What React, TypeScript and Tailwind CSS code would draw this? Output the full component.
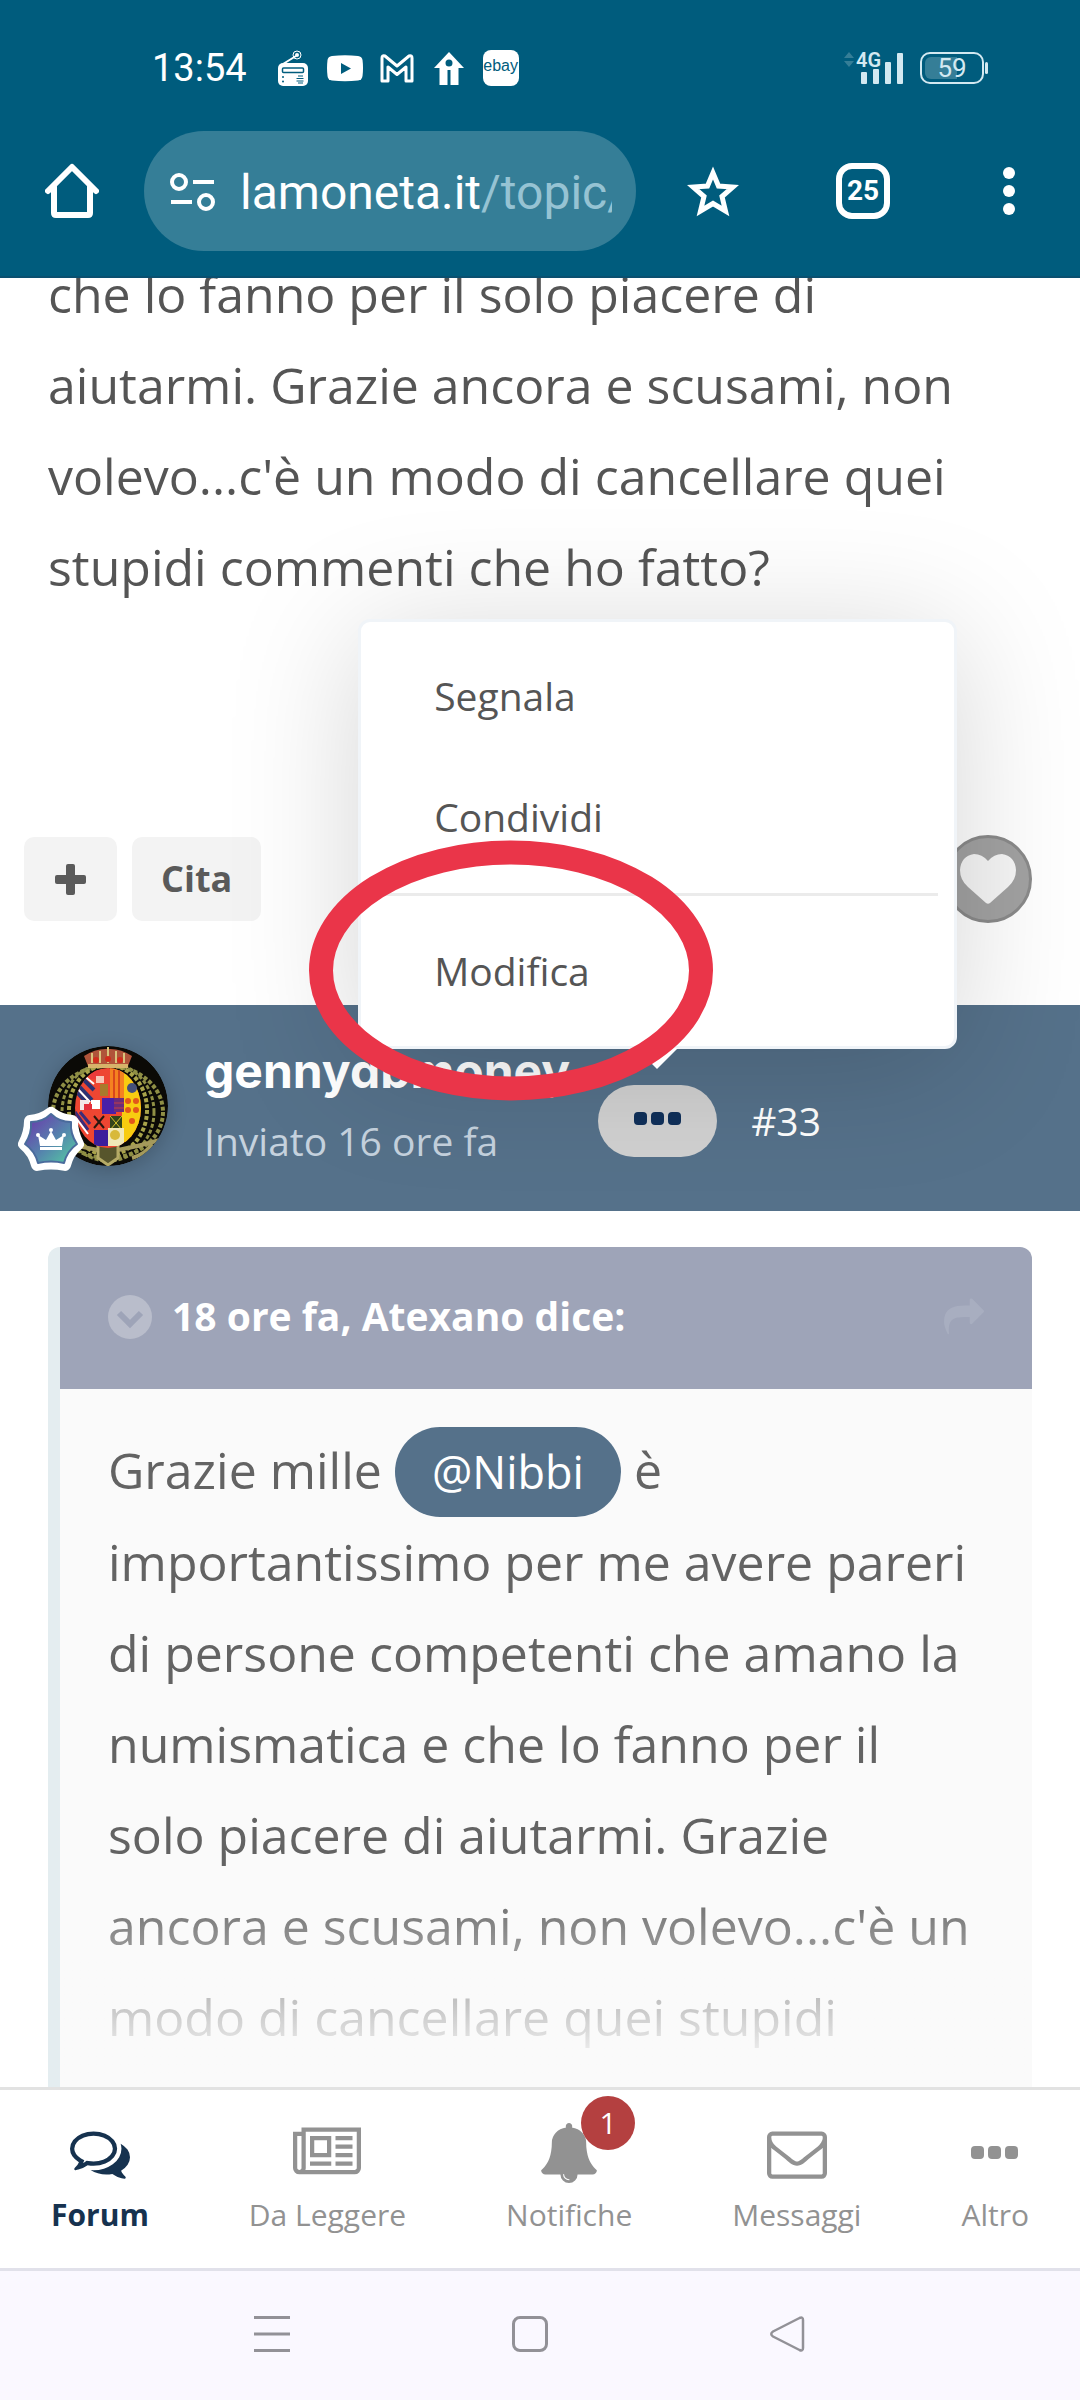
import React from 'react'

const BODY_TEXT = "text-[50px] leading-[91px] font-['Open_Sans',sans-serif]"

const COMMENTS_PATH =
  'M704 384q-153 0-286 52t-211.5 141-78.5 191q0 82 53 158t149 132l97 56-35 84q34-20 62-39l44-31 53 10q78 14 153 14 153 0 286-52t211.5-141 78.5-191-78.5-191-211.5-141-286-52zm0-128q191 0 353.5 68.5t256.5 186.5 94 257-94 257-256.5 186.5-353.5 68.5q-86 0-176-16-124 88-278 128-36 9-86 16h-3q-11 0-20.5-8t-11.5-21q-1-3-1-6.5t.5-6.5 2-6l2.5-5 3.5-5.5 4-5 4.5-5 4-4.5q5-6 23-25t26-29.5 22.5-29 25-38.5 20.5-44q-124-72-195-177t-71-224q0-139 94-257t256.5-186.5 353.5-68.5zm822 1169q10 24 20.5 44t25 38.5 22.5 29 26 29.5 23 25q1 1 4 4.5t4.5 5 4 5 3.5 5.5l2.5 5 2 6 .5 6.5-1 6.5q-3 14-13 22t-22 7q-50-7-86-16-154-40-278-128-90 16-176 16-271 0-472-132 58 4 88 4 161 0 309-45t264-129q125-92 192-212t67-254q0-77-23-152 129 71 204 178t75 230q0 120-71 224.5t-195 176.5z'
const NEWS_PATH =
  'M1024 512h-384v384h384v-384zm128 640v128h-640v-128h640zm0-768v640h-640v-640h640zm640 768v128h-512v-128h512zm0-256v128h-512v-128h512zm0-256v128h-512v-128h512zm0-256v128h-512v-128h512zm-1536 960v-960h-128v960q0 26 19 45t45 19 45-19 19-45zm1664 0v-1088h-1536v1088q0 33-11 64h1483q26 0 45-19t19-45zm128-1216v1216q0 80-56 136t-136 56h-1664q-80 0-136-56t-56-136v-1088h256v-128h1792z'
const BELL_PATH =
  'M912 1696q0-16-16-16-59 0-101.5-42.5t-42.5-101.5q0-16-16-16t-16 16q0 73 51.5 124.5t124.5 51.5q16 0 16-16zm816-288q0 52-38 90t-90 38h-448q0 106-75 181t-181 75-181-75-75-181h-448q-52 0-90-38t-38-90q50-42 91-88t85-119.5 74.5-158.5 50-206 19.5-260q0-152 117-282.5t307-158.5q-8-19-8-39 0-40 28-68t68-28 68 28 28 68q0 20-8 39 190 28 307 158.5t117 282.5q0 139 19.5 260t50 206 74.5 158.5 85 119.5 91 88z'
const ENVELOPE_PATH =
  'M1664 1504v-768q-32 36-69 66-268 206-426 338-51 43-83 67t-86.5 48.5-102.5 24.5h-2q-48 0-102.5-24.5t-86.5-48.5-83-67q-158-132-426-338-37-30-69-66v768q0 13 9.5 22.5t22.5 9.5h1472q13 0 22.5-9.5t9.5-22.5zm0-1051v-24.5l-.5-13-3-12.5-5.5-9-9-7.5-14-2.5h-1472q-13 0-22.5 9.5t-9.5 22.5q0 168 147 284 193 152 401 317 6 5 35 29.5t46 37.5 44.5 31.5 50.5 27.5 43 9h2q20 0 43-9t50.5-27.5 44.5-31.5 46-37.5 35-29.5q208-165 401-317 54-43 100.5-115.5t46.5-131.5zm128-37v1088q0 66-47 113t-113 47h-1472q-66 0-113-47t-47-113v-1088q0-66 47-113t113-47h1472q66 0 113 47t47 113z'
const SHARE_PATH =
  'M1792 640q0 26-19 45l-512 512q-19 19-45 19t-45-19-19-45v-256h-224q-98 0-175.5 6t-154 21.5-133 42.5-105.5 69.5-80 101-48.5 138.5-17.5 181q0 55 5 123 0 6 2.5 23.5t2.5 26.5q0 15-8.5 25t-23.5 10q-16 0-28-17-7-9-13-22t-13.5-30-10.5-24q-127-285-127-451 0-199 53-333 162-403 875-403h224v-256q0-26 19-45t45-19 45 19l512 512q19 19 19 45z'

const tabs = [
  { label: 'Forum', box: '0 0 1792 1792', path: COMMENTS_PATH, size: 'h-[60px] w-[60px]', active: true },
  { label: 'Da Leggere', box: '0 0 2048 1792', path: NEWS_PATH, size: 'h-[60px] w-[68px]' },
  { label: 'Notifiche', box: '0 0 1792 1792', path: BELL_PATH, size: 'h-[60px] w-[60px]', badge: '1' },
  { label: 'Messaggi', box: '0 0 1792 1792', path: ENVELOPE_PATH, size: 'h-[60px] w-[60px]' },
  { label: 'Altro' },
]

function Dots({ className }: { className: string }) {
  return (
    <svg viewBox="0 0 48 14" className={className} fill="currentColor" aria-hidden="true">
      <rect x="0" y="0" width="13" height="13" rx="4" />
      <rect x="17" y="0" width="13" height="13" rx="4" />
      <rect x="34" y="0" width="13" height="13" rx="4" />
    </svg>
  )
}

function StatusBar() {
  return (
    <div className="flex h-[131px] items-center justify-between pt-1 pr-[92px] pl-[152px] font-[Roboto,sans-serif] text-white">
      <div className="flex items-center gap-4">
        <span className="mr-3 text-[38px] leading-none">13:54</span>

        <svg viewBox="0 0 36 36" className="h-9 w-9">
          <rect x="3" y="13" width="30" height="23" rx="5" fill="#fff" />
          <path d="M8 14L21 6" stroke="#fff" strokeWidth="2" />
          <circle cx="22" cy="5" r="4" fill="none" stroke="#fff" strokeWidth="1" />
          <circle cx="22" cy="5" r="2" fill="#fff" />
          <rect x="7.500" y="18" width="21" height="4.500" rx="1" fill="none" stroke="#005c7d" strokeWidth="1.500" />
          <circle cx="8" cy="27" r="1" fill="#005c7d" />
          <circle cx="8" cy="31.500" r="1" fill="#005c7d" />
          <path d="M23 26h5M21.500 28.500h7M21.500 31h7M23 33h5" stroke="#005c7d" strokeWidth="1" />
        </svg>

        <svg viewBox="0 0 36 36" className="h-9 w-9">
          <path d="M5 6Q18 4.500 31 6Q35 6.500 35.500 10Q36.500 18 35.500 26Q35 30 31 30.500Q18 32 5 30.500Q1 30 .500 26Q-.500 18 .500 10Q1 6.500 5 6Z" fill="#fff" />
          <path d="M14 13L24 18.500L14 24Z" fill="#005c7d" />
        </svg>

        <svg viewBox="0 0 36 36" className="h-9 w-9" fill="none" stroke="#fff" strokeWidth="3" strokeLinejoin="round">
          <path d="M3 31V8Q3 5 6 6L18 16L30 6Q33 5 33 8V31H27V17L18 24.500L9 17V31Z" />
        </svg>

        <svg viewBox="0 0 36 36" className="h-9 w-9">
          <path
            fillRule="evenodd"
            fill="#fff"
            d="M18 2L33 18H27.500V35H19.500V20H16.500V35H8.500V18H3ZM18 9.500A3.500 3.500 0 1 0 18 16.500A3.500 3.500 0 1 0 18 9.500Z"
          />
        </svg>

        <span className="flex h-9 w-9 items-center justify-center rounded-lg bg-white pb-1 font-['Liberation_Sans',sans-serif] text-[16px] leading-none text-[#005c7d]">
          ebay
        </span>
      </div>

      <div className="flex items-center gap-4 text-[#d3e9f1]">
        <svg viewBox="0 0 62 36" className="h-9 w-[62px]">
          <path d="M2 8L7 2L12 8ZM2 11L7 17L12 11Z" fill="#357e97" />
          <text x="14" y="17" fontSize="20" fontWeight="600" fill="#d3e9f1">4G</text>
          <rect x="19" y="22" width="6" height="12" rx="1" fill="#d3e9f1" />
          <rect x="31" y="19" width="6" height="15" rx="1" fill="#d3e9f1" />
          <rect x="43" y="12" width="6" height="22" rx="1" fill="#d3e9f1" />
          <rect x="55" y="3" width="6" height="31" rx="1" fill="#d3e9f1" />
        </svg>
        <div className="flex items-center gap-px">
          <div className="flex h-8 w-16 rounded-[10px] border-2 border-[#d3e9f1] p-[3px]">
            <div className="flex w-full items-center justify-center rounded-md bg-linear-to-r from-[#357e97] from-60% to-transparent to-60% text-[26px] leading-none">
              59
            </div>
          </div>
          <div className="h-3 w-[3px] rounded-sm bg-[#d3e9f1]" />
        </div>
      </div>
    </div>
  )
}

function BrowserBar() {
  return (
    <div className="flex h-[120px] items-center pl-[18px] font-[Roboto,sans-serif] text-white">
      <button type="button" aria-label="Home" className="flex w-[108px] justify-center">
        <svg viewBox="0 0 54 56" className="h-14 w-[54px]" fill="none" stroke="#fff" strokeWidth="6" strokeLinecap="round" strokeLinejoin="round">
          <path d="M3 28L27 4L51 28" />
          <path d="M9 24V50Q9 52 11 52H43Q45 52 45 50V24" />
        </svg>
      </button>

      <button
        type="button"
        className="mr-[2px] ml-[18px] flex h-[120px] min-w-0 flex-1 items-center rounded-full bg-[#357e97] px-6 text-left"
      >
        <svg viewBox="0 0 48 40" className="h-10 w-12 shrink-0" fill="none" stroke="#fff" strokeWidth="4">
          <circle cx="11" cy="11" r="7" />
          <circle cx="38" cy="31" r="7" />
          <path d="M25 11H46M3 31H24" />
        </svg>
        <span className="ml-6 overflow-hidden pt-[3px] text-[48px] leading-[60px] whitespace-nowrap">
          lamoneta.it<span className="text-[#96c3d3]">/topic/</span>
        </span>
      </button>

      <button type="button" aria-label="Aggiungi ai preferiti" className="flex w-[150px] justify-center">
        <svg viewBox="0 0 52 52" className="h-[52px] w-[52px]" fill="none" stroke="#fff" strokeWidth="5">
          <path d="M26 8L31.500 21L46 22L35 31.500L38.500 46L26 38.500L13.500 46L17 31.500L6 22L20.500 21Z" />
        </svg>
      </button>
      <button type="button" aria-label="Schede" className="flex w-[150px] justify-center">
        <span className="flex h-14 w-[54px] items-center justify-center rounded-2xl border-[6px] border-white text-[28px] leading-none font-bold">
          25
        </span>
      </button>
      <button type="button" aria-label="Menu" className="flex w-[142px] flex-col items-center gap-[6px]">
        <span className="h-3 w-3 rounded-full bg-white" />
        <span className="h-3 w-3 rounded-full bg-white" />
        <span className="h-3 w-3 rounded-full bg-white" />
      </button>
    </div>
  )
}

function Avatar() {
  return (
    <div className="relative h-[120px] w-[120px] shrink-0">
      <svg viewBox="0 0 120 120" className="h-full w-full rounded-full shadow-[0_4px_20px_rgba(0,0,0,0.2)]">
        <defs>
          <clipPath id="round"><circle cx="60" cy="60" r="60" /></clipPath>
          <clipPath id="shield"><ellipse cx="60" cy="62" rx="33" ry="40" /></clipPath>
        </defs>
        <g clipPath="url(#round)">
          <rect width="120" height="120" fill="#0b0a06" />
          <g fill="none" stroke="#8f8f45" strokeDasharray="4 2">
            <ellipse cx="60" cy="66" rx="55" ry="46" strokeWidth="4" />
            <ellipse cx="60" cy="66" rx="46" ry="49" strokeWidth="3" />
            <ellipse cx="60" cy="64" rx="39" ry="45" strokeWidth="4" stroke="#a8a34a" />
          </g>
          <path d="M10 96Q30 100 50 104M70 104Q92 100 112 94M84 112Q98 108 104 98" stroke="#a59a5b" strokeWidth="4" fill="none" />
          <path d="M50 98L60 95L70 98V112L60 119L50 112Z" fill="#57552c" stroke="#b5aa66" strokeWidth="3" />
          <path d="M36 10Q48 2 60 3Q72 2 84 10L80 20H40Z" fill="#b0543a" />
          <path d="M40 20H80" stroke="#d7b36a" strokeWidth="4" />
          <path d="M44 7V17M52 5V17M60 1V17M68 5V17M76 7V17" stroke="#d9c37a" strokeWidth="2" />
          <circle cx="48" cy="14" r="3" fill="#d22c1c" />
          <circle cx="60" cy="13" r="3" fill="#d22c1c" />
          <circle cx="72" cy="14" r="3" fill="#d22c1c" />
          <g clipPath="url(#shield)">
            <rect x="26" y="20" width="68" height="84" fill="#ee4632" />
            <rect x="74" y="20" width="20" height="76" fill="#f8cc10" />
            <rect x="62" y="22" width="14" height="30" fill="#f58220" />
            <path d="M66 24V52M71 24V52" stroke="#d9471c" strokeWidth="2" />
            <path d="M27 36L44 54M32 30L46 44M27 44L38 56" stroke="#2b3273" strokeWidth="4" />
            <path d="M34 28L46 38M27 40L42 56" stroke="#fff" strokeWidth="2" />
            <rect x="42" y="24" width="10" height="9" fill="#ea3a3a" />
            <rect x="48" y="30" width="8" height="7" fill="#f7c6b8" />
            <rect x="52" y="38" width="8" height="12" fill="#a87a2c" />
            <rect x="32" y="54" width="9" height="10" fill="#f3e8e8" />
            <rect x="43" y="54" width="9" height="9" fill="#fff" />
            <rect x="36" y="58" width="8" height="6" fill="#e32f3c" />
            <rect x="54" y="52" width="14" height="16" fill="#4a1fa8" />
            <rect x="66" y="52" width="10" height="14" fill="#6b2c7a" />
            <path d="M66 57H76M66 62H76" stroke="#c23d4a" strokeWidth="1" />
            <path d="M27 66L40 84M32 66L42 78" stroke="#3b2d7a" strokeWidth="3" />
            <path d="M28 72L40 88" stroke="#fff" strokeWidth="2" />
            <path d="M46 70L56 82M56 70L46 82" stroke="#2a1710" strokeWidth="2" />
            <rect x="62" y="70" width="12" height="14" fill="#31451b" />
            <path d="M62 70L74 84M74 70L62 84" stroke="#d8c52c" strokeWidth="1" />
            <rect x="46" y="84" width="14" height="16" fill="#3b1d9c" />
            <rect x="60" y="82" width="16" height="18" fill="#f1e9b8" />
            <circle cx="67" cy="89" r="5" fill="#d8b93a" />
          </g>
          <circle cx="84" cy="42" r="5" fill="#45507a" />
          <g fill="#e2561b">
            <circle cx="80" cy="55" r="3" /><circle cx="88" cy="55" r="3" />
            <circle cx="80" cy="64" r="3" /><circle cx="88" cy="64" r="3" />
            <circle cx="84" cy="75" r="3" />
          </g>
        </g>
      </svg>

      {/* Rank badge */}
      <svg viewBox="0 0 66 66" className="absolute -bottom-[6px] -left-[30px] h-[66px] w-[66px]">
        <defs>
          <linearGradient id="rank" x1="0" y1="0" x2="1" y2="1">
            <stop offset="0.150" stopColor="#6648ac" />
            <stop offset="0.550" stopColor="#5585ad" />
            <stop offset="0.900" stopColor="#55c0a4" />
          </linearGradient>
        </defs>
        <path d="M33 7Q42 14 54 15Q54 27 60 38Q50 46 47 59Q33 56 19 59Q16 46 6 38Q12 27 12 15Q24 14 33 7Z" fill="#fff" stroke="#fff" strokeWidth="12" strokeLinejoin="round" />
        <path d="M33 8Q41 16 53 16Q52 28 59 38Q49 45 46 57Q33 54 20 57Q17 45 7 38Q14 28 13 16Q25 16 33 8Z" fill="url(#rank)" stroke="#4a6b9c" strokeWidth="2" strokeLinejoin="round" />
        <path d="M22 40L20 29L28 34L33 25L38 34L46 29L44 40Z" fill="#fff" />
        <rect x="22" y="41" width="22" height="3" fill="#fff" />
        <circle cx="33" cy="24" r="2" fill="#fff" />
        <circle cx="20" cy="29" r="2" fill="#fff" />
        <circle cx="46" cy="29" r="2" fill="#fff" />
      </svg>
    </div>
  )
}

function PostMenu() {
  const item = 'flex h-[121px] w-full items-center px-[73px] text-left'
  return (
    <div
      role="menu"
      className="absolute bottom-[108px] -left-[240px] z-10 w-[599px] rounded-xl border-[3px] border-[#f0f4f8] bg-white py-[14px] text-[39px] text-[#555555] shadow-[0_16px_130px_rgba(0,0,0,0.17)]"
    >
      <button type="button" role="menuitem" className={item}>Segnala</button>
      <button type="button" role="menuitem" className={item}>Condividi</button>
      <div className="mx-4 my-[15px] h-[3px] bg-[#ebebeb]" />
      <div className="relative">
        <button type="button" role="menuitem" className={item}>Modifica</button>
        {/* Marker drawn round the edit entry */}
        <svg viewBox="0 0 404 261" className="pointer-events-none absolute -top-[71px] -left-[52px] z-10 h-[261px] w-[404px]">
          <ellipse cx="202" cy="130.500" rx="190" ry="118" fill="none" stroke="#ea3549" strokeWidth="24" />
        </svg>
      </div>
      <svg viewBox="0 0 42 21" className="absolute top-full left-[275px] mt-[2px] h-[21px] w-[42px]">
        <path d="M0 0H42L21 21Z" fill="#fff" />
      </svg>
    </div>
  )
}

export default function App() {
  return (
    <div className="flex h-screen flex-col bg-white font-['Open_Sans',sans-serif]">
      <header className="shrink-0 border-b-2 border-[#0a5070] bg-[#005c7d] pb-[25px]">
        <StatusBar />
        <BrowserBar />
      </header>

      <main className="min-h-0 flex-1 overflow-hidden">
        <article>
          <p className={`${BODY_TEXT} -mt-[29px] px-12 text-[#555555]`}>
            che lo fanno per il solo piacere di aiutarmi. Grazie ancora e scusami, non volevo...c'è un modo di
            cancellare quei stupidi commenti che ho fatto?
          </p>
          <div className="mt-[222px] flex items-center justify-between pr-12 pb-[82px] pl-6">
            <div className="flex gap-[15px]">
              <button type="button" aria-label="Multi-cita" className="flex h-[84px] w-[93px] items-center justify-center rounded-[10px] bg-[#f3f3f3]">
                <svg viewBox="0 0 31 31" className="h-[31px] w-[31px]" fill="#5a5a5a">
                  <rect x="11" y="0" width="9" height="31" rx="2" />
                  <rect x="0" y="11" width="31" height="9" rx="2" />
                </svg>
              </button>
              <button type="button" className="h-[84px] rounded-[10px] bg-[#f3f3f3] px-[29px] text-[36px] font-bold text-[#5a5a5a]">
                Cita
              </button>
            </div>
            <button type="button" aria-label="Mi piace" className="flex h-[88px] w-[88px] items-center justify-center rounded-full border-[3px] border-[#8a8a8a] bg-[#a2a2a2]">
              <svg viewBox="0 0 56 50" className="h-[50px] w-14">
                <path d="M28 7Q34 0 42 0Q55 2 56 16Q56 26 48 33L30 49Q28 50.500 26 49L8 33Q0 26 0 16Q1 2 14 0Q22 0 28 7Z" fill="#f6f6f6" />
              </svg>
            </button>
          </div>
        </article>

        <article>
          <div className="flex h-[206px] items-center bg-[#55718a] pb-1 pl-12">
            <Avatar />
            <div className="ml-9 flex flex-col gap-[14px]">
              <h3 className="overflow-hidden font-[Inter,sans-serif] text-[48px] leading-[56px] font-bold text-white">
                gennydbmoney
              </h3>
              <p className="text-[39px] leading-[56px] text-[#c5d2de]">Inviato 16 ore fa</p>
            </div>
            <div className="mt-[29px] ml-[28px] flex items-center gap-[34px]">
              <div className="relative">
                <button type="button" aria-label="Altre opzioni" className="flex h-[72px] w-[119px] items-center justify-center rounded-full bg-[#d1d1d1] pb-1 text-[#10305a]">
                  <Dots className="h-[14px] w-12" />
                </button>
                <PostMenu />
              </div>
              <a href="#33" className="text-[39px] leading-[56px] text-white">#33</a>
            </div>
          </div>

          <blockquote className="mx-12 mt-9 overflow-hidden rounded-t-xl border-l-[12px] border-[#e4edf0] bg-[#fafafa]">
            <div className="flex h-[142px] items-center justify-between bg-[#9ea4b8] px-12 pb-[3px] text-[39px] font-bold text-white">
              <div className="flex items-center gap-5">
                <svg viewBox="0 0 44 44" className="h-11 w-11">
                  <circle cx="22" cy="22" r="22" fill="#b9bdcb" />
                  <path d="M11 18L22 29L33 18" fill="none" stroke="#9ea4b8" strokeWidth="6" />
                </svg>
                <span>18 ore fa, Atexano dice:</span>
              </div>
              <a href="#post" aria-label="Vai al messaggio">
                <svg viewBox="0 0 1792 1792" className="h-10 w-10" fill="#a8aec0"><path d={SHARE_PATH} /></svg>
              </a>
            </div>
            <div className="relative px-12 pt-9 pb-40">
              <p className={`${BODY_TEXT} text-[#636363]`}>
                Grazie mille{' '}
                <a href="#nibbi" className="inline-block rounded-full bg-[#55718a] px-[37px] text-[45px] leading-[90px] text-white">
                  @Nibbi
                </a>{' '}
                è importantissimo per me avere pareri di persone competenti che amano la numismatica e che lo fanno per
                il solo piacere di aiutarmi. Grazie ancora e scusami, non volevo...c'è un modo di cancellare quei stupidi
              </p>
              <div className="absolute right-0 bottom-0 left-0 h-[340px] bg-linear-to-b from-[#fafafa]/0 to-[#fafafa] to-55%" />
            </div>
          </blockquote>
        </article>
      </main>

      <nav className="flex shrink-0 justify-between border-t-[3px] border-[#e2e2e2] bg-white px-[51px] pt-[31px] pb-[31px]">
        {tabs.map((tab) => (
          <a
            key={tab.label}
            href="#tab"
            className={`flex flex-col items-center gap-2 text-[30px] leading-[44px] ${
              tab.active ? 'font-bold text-[#16324f]' : 'text-[#929292]'
            }`}
          >
            <span className="relative flex h-16 items-center">
              {tab.path ? (
                <svg viewBox={tab.box} className={tab.size} fill="currentColor"><path d={tab.path} /></svg>
              ) : (
                <Dots className="h-[14px] w-12" />
              )}
              {tab.badge && (
                <span className="absolute -top-[25px] left-[42px] flex h-[54px] w-[54px] items-center justify-center rounded-full bg-[#b44040] text-white">
                  {tab.badge}
                </span>
              )}
            </span>
            {tab.label}
          </a>
        ))}
      </nav>

      <footer className="flex h-[132px] shrink-0 items-center justify-center gap-[222px] border-t-[3px] border-[#e1e1ea] bg-[#faf8ff] pr-5 pb-[3px]">
        <button type="button" aria-label="Recenti">
          <svg viewBox="0 0 36 36" className="h-9 w-9" stroke="#929197" strokeWidth="3">
            <path d="M0 1.500H36M0 18H36M0 34.500H36" />
          </svg>
        </button>
        <button type="button" aria-label="Schermata Home" className="h-9 w-9 rounded-lg border-[3px] border-[#929197]" />
        <button type="button" aria-label="Indietro">
          <svg viewBox="0 0 36 36" className="h-9 w-9" fill="none" stroke="#929197" strokeWidth="2.500" strokeLinejoin="round">
            <path d="M29.500 2Q33 .500 33 4V32Q33 35.500 29.500 34L3 20.500Q-.500 18 3 15.500Z" />
          </svg>
        </button>
      </footer>
    </div>
  )
}
